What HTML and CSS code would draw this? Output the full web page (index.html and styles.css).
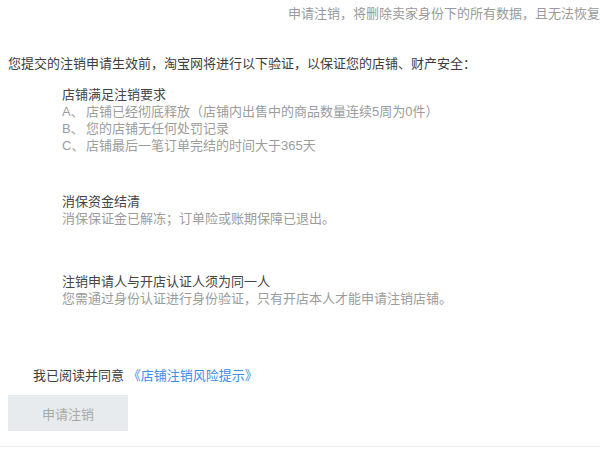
FILE: index.html
```html
<!DOCTYPE html>
<html lang="zh-CN">
<head>
<meta charset="utf-8">
<title>申请注销</title>
<link rel="stylesheet" href="styles.css">
</head>
<body>
<div class="page">
  <div class="notice">申请注销，将删除卖家身份下的所有数据，且无法恢复</div>
  <p class="intro">您提交的注销申请生效前，淘宝网将进行以下验证，以保证您的店铺、财产安全：</p>
  <div class="checks">
    <div class="check">
      <div class="check-title">店铺满足注销要求</div>
      <div class="check-item"><span class="mark">A、</span>店铺已经彻底释放（店铺内出售中的商品数量连续5周为0件）</div>
      <div class="check-item"><span class="mark">B、</span>您的店铺无任何处罚记录</div>
      <div class="check-item"><span class="mark">C、</span>店铺最后一笔订单完结的时间大于365天</div>
    </div>
    <div class="check check-2">
      <div class="check-title">消保资金结清</div>
      <div class="check-item">消保保证金已解冻；订单险或账期保障已退出。</div>
    </div>
    <div class="check check-3">
      <div class="check-title">注销申请人与开店认证人须为同一人</div>
      <div class="check-item">您需通过身份认证进行身份验证，只有开店本人才能申请注销店铺。</div>
    </div>
  </div>
  <div class="agree">我已阅读并同意 <a class="agree-link" href="#">《店铺注销风险提示》</a></div>
  <button class="submit" type="button">申请注销</button>
</div>
</body>
</html>
```

FILE: styles.css
```css
html, body {
  margin: 0;
  padding: 0;
  background: #ffffff;
}
body {
  font-family: "Liberation Sans", "Noto Sans CJK SC", sans-serif;
  font-size: 13px;
  line-height: 17px;
  color: #3d3d3d;
  overflow: hidden;
}
.page {
  width: 600px;
  height: 447px;
  box-sizing: border-box;
  padding: 5px 0 0 8px;
  border-bottom: 1px solid #eeeeee;
  overflow: hidden;
}
.notice {
  text-align: right;
  white-space: nowrap;
  color: #9a9a9a;
}
.intro {
  margin: 33px 0 0;
  white-space: nowrap;
  color: #3d3d3d;
}
.checks {
  padding-left: 54px;
  margin-top: 14px;
}
.check-title {
  color: #444444;
}
.check-item {
  color: #9c9c9c;
  white-space: nowrap;
}
.mark {
  display: inline-block;
  width: 24px;
}
.check-2 {
  margin-top: 39px;
}
.check-3 {
  margin-top: 46px;
}
.agree {
  margin-top: 60px;
  padding-left: 25px;
  color: #3d3d3d;
}
.agree-link {
  color: #3a8ee6;
  text-decoration: none;
}
.submit {
  display: block;
  margin-top: 11px;
  width: 120px;
  height: 36px;
  border: none;
  background: #e8ebed;
  color: #a8a8a8;
  font-family: inherit;
  font-size: 13px;
  padding: 0;
}
```
